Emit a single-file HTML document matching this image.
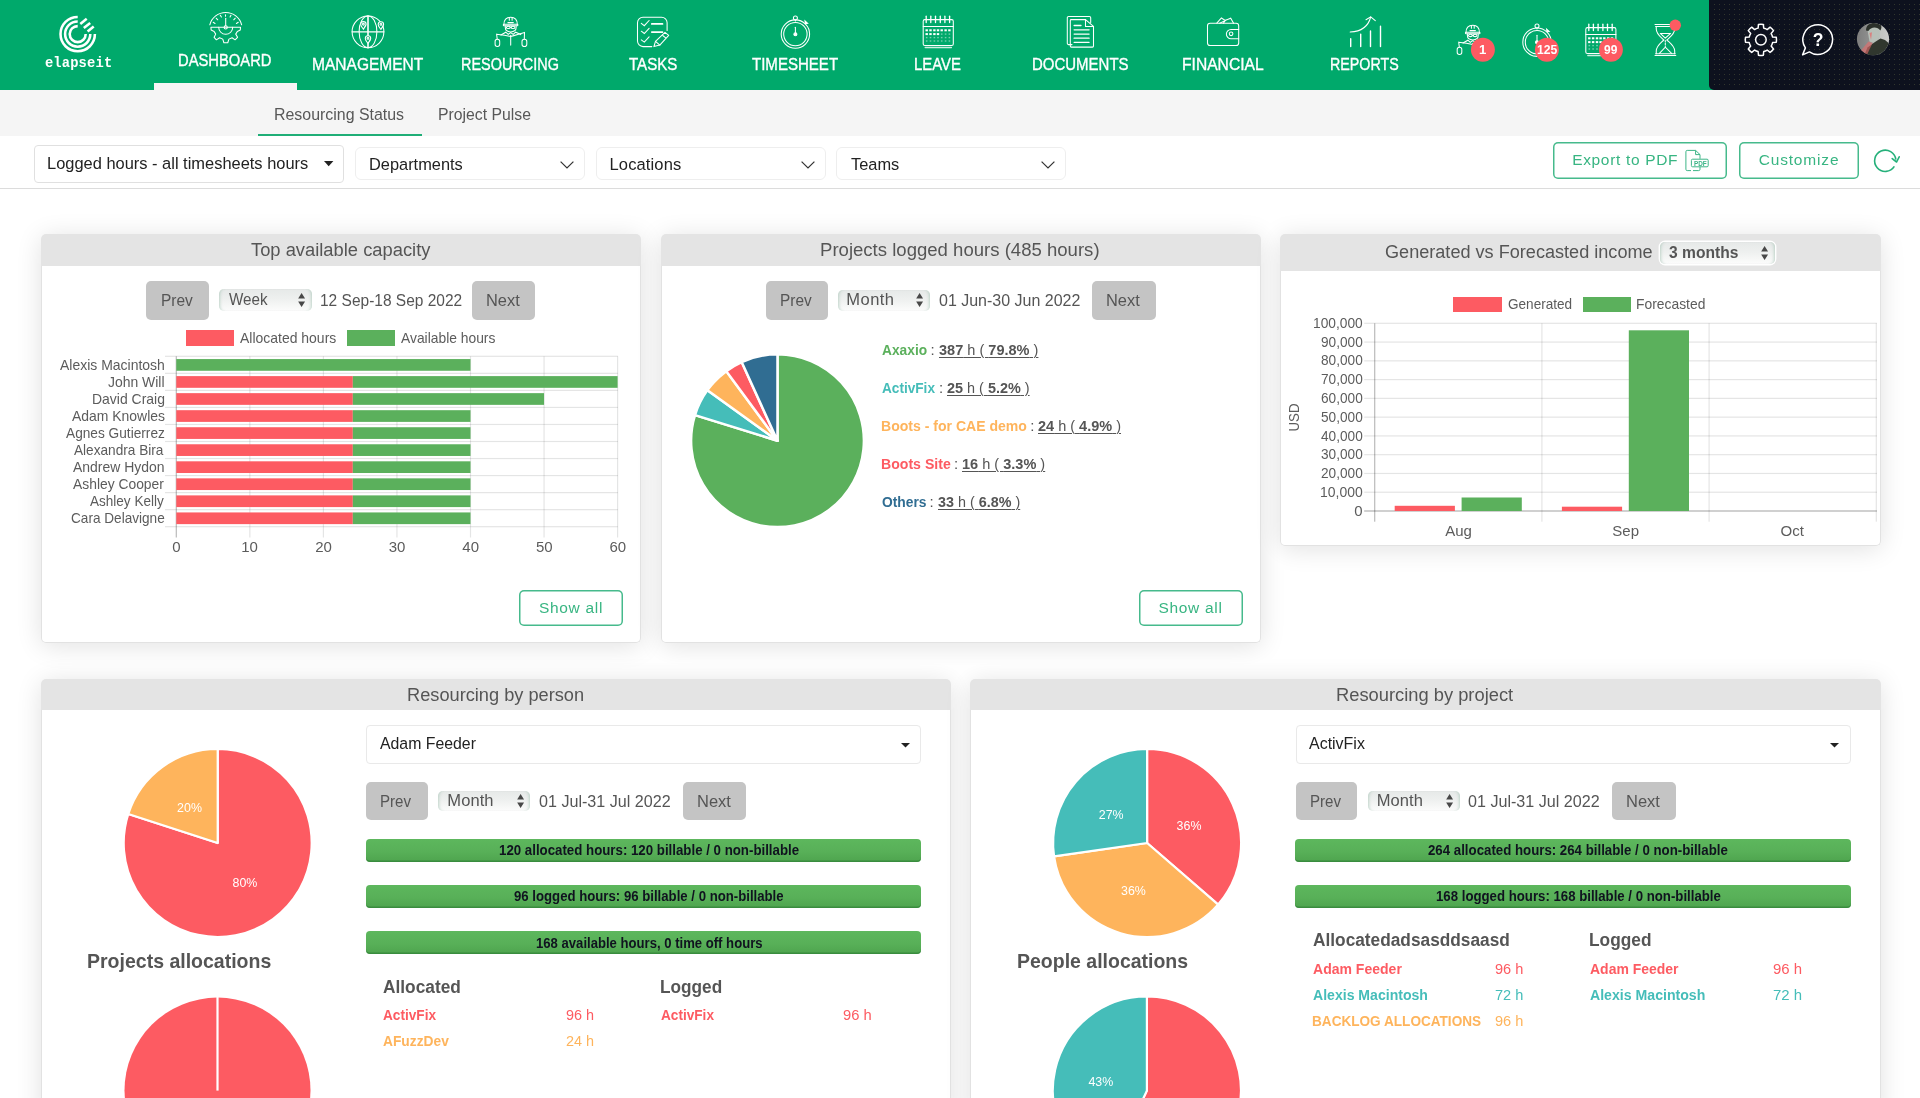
<!DOCTYPE html>
<html lang="en"><head><meta charset="utf-8"><title>elapseit - Dashboard</title>
<style>
html,body{margin:0;padding:0;}
body{width:1920px;height:1098px;overflow:hidden;background:#fff;font-family:"Liberation Sans",sans-serif;position:relative;}
svg{position:absolute;overflow:visible;}
.panel{position:absolute;background:#fff;border-radius:5px;box-shadow:0 3px 26px rgba(0,0,0,0.12);}
.pb{position:absolute;left:0;right:0;bottom:0;border:1px solid #e2e2e2;border-top:none;border-radius:0 0 5px 5px;box-sizing:border-box;}
.ph{position:absolute;left:0;top:0;right:0;background:#e4e4e4;border-radius:5px 5px 0 0;}
.gbtn{position:absolute;background:#c4c4c4;border-radius:5px;}
.sel{position:absolute;border-radius:5px;background:linear-gradient(#e6e9e8 0%,#eef0ef 45%,#f7f8f7 80%,#fcfcfc 100%);box-shadow:inset 3px 0 3px -2px rgba(150,185,168,0.55),inset -3px 0 3px -2px rgba(150,185,168,0.55);}
.obtn{position:absolute;box-shadow:inset 0 0 0 1.5px #46ba8c;border-radius:5px;box-sizing:border-box;}
.pbar{position:absolute;border-radius:4px;background:linear-gradient(#5db75d 0%,#58b058 55%,#4ea44e 100%);box-shadow:inset 0 -1.5px 0 rgba(40,120,50,0.55);}
</style></head><body><div style="position:absolute;left:0;top:0;width:1920px;height:1098px;will-change:transform;">
<div style="position:absolute;left:0.00px;top:0.00px;width:1920.00px;height:90.00px;background:#00a96b;"></div>
<div style="position:absolute;left:154.00px;top:82.50px;width:143.00px;height:7.50px;background:#f5f5f5;"></div>
<div style="position:absolute;left:0.00px;top:90.00px;width:1920.00px;height:46.00px;background:#f5f5f5;"></div>
<div style="position:absolute;left:0.00px;top:188.00px;width:1920.00px;height:1.00px;background:#dcdcdc;"></div>
<svg style="left:0;top:0" width="160" height="90" fill="none" stroke="#fff" stroke-width="2.55"><path d="M94.90 34.10 A17.20 17.20 0 1 1 77.70 16.90"/><path d="M90.30 34.10 A12.60 12.60 0 1 1 77.70 21.50"/><path d="M85.70 34.10 A8.00 8.00 0 1 1 77.70 26.10"/><path d="M80.3 23.9L86.7 18.8"/><path d="M83.8 28.1L90.2 23.0"/><path d="M87.6 31.6L93.7 26.5"/></svg>
<span style="position:absolute;white-space:nowrap;left:44.90px;top:57px;font:700 13.75px/1 'Liberation Mono', monospace;color:#fff;letter-spacing:0.177px;">elapseit</span>
<span style="position:absolute;white-space:nowrap;left:178.11px;top:53px;font:400 16.53px/1 'Liberation Sans', sans-serif;color:#fff;transform:scaleX(0.8940);transform-origin:0 50%;-webkit-text-stroke:0.35px #fff;">DASHBOARD</span>
<span style="position:absolute;white-space:nowrap;left:311.56px;top:57px;font:400 16.53px/1 'Liberation Sans', sans-serif;color:#fff;transform:scaleX(0.9405);transform-origin:0 50%;-webkit-text-stroke:0.35px #fff;">MANAGEMENT</span>
<span style="position:absolute;white-space:nowrap;left:461.13px;top:57px;font:400 16.53px/1 'Liberation Sans', sans-serif;color:#fff;transform:scaleX(0.8746);transform-origin:0 50%;-webkit-text-stroke:0.35px #fff;">RESOURCING</span>
<span style="position:absolute;white-space:nowrap;left:629.00px;top:57px;font:400 16.53px/1 'Liberation Sans', sans-serif;color:#fff;transform:scaleX(0.9129);transform-origin:0 50%;-webkit-text-stroke:0.35px #fff;">TASKS</span>
<span style="position:absolute;white-space:nowrap;left:752.30px;top:57px;font:400 16.53px/1 'Liberation Sans', sans-serif;color:#fff;transform:scaleX(0.9108);transform-origin:0 50%;-webkit-text-stroke:0.35px #fff;">TIMESHEET</span>
<span style="position:absolute;white-space:nowrap;left:914.10px;top:57px;font:400 16.53px/1 'Liberation Sans', sans-serif;color:#fff;transform:scaleX(0.9019);transform-origin:0 50%;-webkit-text-stroke:0.35px #fff;">LEAVE</span>
<span style="position:absolute;white-space:nowrap;left:1031.79px;top:57px;font:400 16.53px/1 'Liberation Sans', sans-serif;color:#fff;transform:scaleX(0.9069);transform-origin:0 50%;-webkit-text-stroke:0.35px #fff;">DOCUMENTS</span>
<span style="position:absolute;white-space:nowrap;left:1181.55px;top:57px;font:400 16.53px/1 'Liberation Sans', sans-serif;color:#fff;transform:scaleX(0.9462);transform-origin:0 50%;-webkit-text-stroke:0.35px #fff;">FINANCIAL</span>
<span style="position:absolute;white-space:nowrap;left:1330.44px;top:57px;font:400 16.53px/1 'Liberation Sans', sans-serif;color:#fff;transform:scaleX(0.8647);transform-origin:0 50%;-webkit-text-stroke:0.35px #fff;">REPORTS</span>
<div style="position:absolute;left:1709px;top:0;width:211px;height:90px;background-color:#0d111e;border-bottom-left-radius:5px;"></div>
<div style="position:absolute;left:1713px;top:3px;width:207px;height:84px;background-image:radial-gradient(circle at 1.5px 1.5px, rgba(120,130,75,0.34) 0.45px, transparent 0.95px);background-size:5px 5px;"></div>
<svg style="left:0;top:0" width="1920" height="90" fill="none" stroke="#fff" stroke-width="1.05" stroke-linecap="round"><path d="M209.8 24.8 A16.46 16.46 0 0 1 241.65 24.8" /><path d="M210.93 27.30 L211.16 30.03 L214.12 31.40 L215.71 34.13 L214.12 37.32 L216.39 39.82 L219.58 37.77 L222.77 39.14 L223.90 42.78 L227.77 42.78 L228.91 39.14 L232.10 37.77 L235.05 39.82 L237.56 37.32 L235.74 34.13 L237.33 31.40 L240.29 30.03 L240.52 27.30 Z" stroke-linejoin="round"/><path d="M218.7 27.3 A7 7 0 0 0 232.7 27.3" /><circle cx="225.7" cy="27.4" r="1.6"/><path d="M225.7 25.8 V18.2" /><path d="M225.50 14.80L225.50 16.20" /><path d="M220.26 15.24L221.40 17.06" /><path d="M216.17 18.20L217.76 19.80" /><path d="M213.20 22.30L215.03 23.43" /><path d="M230.96 15.24L230.05 17.06" /><path d="M235.28 18.20L233.69 19.80" /><path d="M238.24 22.30L236.42 23.43" /><circle cx="368.00" cy="31.85" r="15.90"/><ellipse cx="368.00" cy="31.85" rx="8.9" ry="15.90"/><path d="M368.00 15.95 V47.75" stroke-width="1.6"/><path d="M352.10 31.85 H383.90" /><path d="M363.40 29.20 C362.20 27.60 360.70 26.20 360.70 24.30 C360.70 20.70 366.10 20.70 366.10 24.30 Z M366.10 24.30 C366.10 26.20 364.60 27.60 363.40 29.20" fill="#00a96b"/><circle cx="363.40" cy="24.20" r="0.9"/><path d="M380.90 29.40 C379.70 27.80 378.20 26.40 378.20 24.50 C378.20 20.90 383.60 20.90 383.60 24.50 Z M383.60 24.50 C383.60 26.40 382.10 27.80 380.90 29.40" fill="#00a96b"/><circle cx="380.90" cy="24.40" r="0.9"/><path d="M368.00 43.40 C366.80 41.80 365.30 40.40 365.30 38.50 C365.30 34.90 370.70 34.90 370.70 38.50 Z M370.70 38.50 C370.70 40.40 369.20 41.80 368.00 43.40" fill="#00a96b"/><circle cx="368.00" cy="38.40" r="0.9"/><g transform="translate(0.00 0.00)"><path d="M503.9 24.6 C503.9 20 506.5 17.3 510.7 17.3 C514.9 17.3 517.3 20 517.3 24.6" /><rect x="503.3" y="24.3" width="14.6" height="1.5" rx="0.7"/><path d="M509.3 17.5 V20.3 M512.1 17.5 V20.3" /><path d="M508 22.6 H513.2" stroke-width="1.4"/><path d="M505.3 26 V27.6 C505.3 30.4 507.9 31.9 510.7 31.9 C513.5 31.9 516.1 30.4 516.1 27.6 V26" /><ellipse cx="508.3" cy="27.4" rx="1.9" ry="1.2"/><ellipse cx="513.0" cy="27.4" rx="1.9" ry="1.2"/><path d="M510.2 27.2 H511.1" /><path d="M500.9 35 L505.8 32.2 L508.2 34.4 L510.7 32.6 L513.2 34.4 L515.6 32.2 L520.8 34.6" /><path d="M497.2 39 L496.6 34.2 C501 34.6 506 35.2 510.7 36.4 C515 35.4 520 33.6 524.5 32.4 L524.3 39" /><path d="M510.7 35.2 V45.1" /><rect x="495.1" y="39.2" width="4.6" height="7.3" rx="2.2"/><rect x="522.0" y="39.2" width="4.8" height="7.3" rx="2.3"/></g><path d="M651.8 46.6 H643 A5.5 5.5 0 0 1 637.5 41.1 V22.8 A5.5 5.5 0 0 1 643 17.3 H661.6 A5.5 5.5 0 0 1 667.1 22.8 V30.5" /><path d="M641.3 23.40 L644.3 25.70 L649.1 20.50" /><path d="M641.3 31.20 L644.3 33.50 L649.1 28.30" /><path d="M641.3 39.80 L644.3 42.10 L649.1 36.90" /><path d="M651.8 23.9 H662.5 M651.8 32.1 H662.5" stroke-width="1.7"/><path d="M653.9 46.6 L655.5 41.4 L665.0 32.3 L668.7 35.3 L659.8 45.1 Z" stroke-linejoin="round"/><path d="M655.5 41.4 L659.8 45.1 M662.7 35.5 L665.7 37.8" /><g transform="translate(0.00 0.00)"><circle cx="795.40" cy="34.10" r="14.2"/><circle cx="795.40" cy="34.10" r="11.7"/><circle cx="795.40" cy="17.9" r="2.0"/><path d="M795.40 19.9 V20.9" /><path d="M805.0 21.0 L807.6 23.4 L805.4 23.6 Z" fill="#fff"/><path d="M795.40 27.2 V32.6" /><circle cx="795.40" cy="34.2" r="1.5" fill="#fff"/></g><g transform="translate(0.00 0.00)"><rect x="923.2" y="19.6" width="30.1" height="25.9" rx="1.6"/><path d="M923.2 26.4 H953.3" /><path d="M925.2 47.5 H951.4" stroke-width="1.3" stroke-opacity="0.8"/><path d="M926.20 16.2 V22.5" stroke-width="1.3"/><path d="M930.80 16.2 V22.5" stroke-width="1.3"/><path d="M935.50 16.2 V22.5" stroke-width="1.3"/><path d="M940.30 16.2 V22.5" stroke-width="1.3"/><path d="M944.90 16.2 V22.5" stroke-width="1.3"/><path d="M949.60 16.2 V22.5" stroke-width="1.3"/><rect x="925.50" y="29.30" width="2.4" height="2.0" fill="#fff" stroke="none"/><rect x="929.30" y="29.30" width="2.4" height="2.0" fill="#fff" stroke="none"/><rect x="933.20" y="29.30" width="2.4" height="2.0" fill="#fff" stroke="none"/><rect x="936.80" y="29.30" width="2.4" height="2.0" fill="#fff" stroke="none"/><rect x="940.50" y="29.30" width="2.4" height="2.0" fill="#fff" stroke="none"/><rect x="944.40" y="29.30" width="2.4" height="2.0" fill="#fff" stroke="none"/><rect x="948.20" y="29.30" width="2.4" height="2.0" fill="#fff" stroke="none"/><rect x="925.50" y="33.10" width="2.4" height="2.0" fill="#fff" stroke="none"/><rect x="929.30" y="33.10" width="2.4" height="2.0" fill="#fff" stroke="none"/><rect x="933.20" y="33.10" width="2.4" height="2.0" fill="#fff" stroke="none"/><rect x="936.80" y="33.10" width="2.4" height="2.0" fill="#fff" stroke="none"/><rect x="940.90" y="33.40" width="1.6" height="1.4" fill="#fff" fill-opacity="0.45" stroke="none"/><rect x="944.80" y="33.40" width="1.6" height="1.4" fill="#fff" fill-opacity="0.45" stroke="none"/><rect x="948.60" y="33.40" width="1.6" height="1.4" fill="#fff" fill-opacity="0.45" stroke="none"/><rect x="925.90" y="36.90" width="1.6" height="1.4" fill="#fff" fill-opacity="0.45" stroke="none"/><rect x="929.70" y="36.90" width="1.6" height="1.4" fill="#fff" fill-opacity="0.45" stroke="none"/><rect x="933.60" y="36.90" width="1.6" height="1.4" fill="#fff" fill-opacity="0.45" stroke="none"/><rect x="937.20" y="36.90" width="1.6" height="1.4" fill="#fff" fill-opacity="0.45" stroke="none"/><rect x="940.90" y="36.90" width="1.6" height="1.4" fill="#fff" fill-opacity="0.45" stroke="none"/><rect x="944.80" y="36.90" width="1.6" height="1.4" fill="#fff" fill-opacity="0.45" stroke="none"/><rect x="948.60" y="36.90" width="1.6" height="1.4" fill="#fff" fill-opacity="0.45" stroke="none"/><rect x="925.90" y="40.30" width="1.6" height="1.4" fill="#fff" fill-opacity="0.45" stroke="none"/><rect x="929.70" y="40.30" width="1.6" height="1.4" fill="#fff" fill-opacity="0.45" stroke="none"/><rect x="933.60" y="40.30" width="1.6" height="1.4" fill="#fff" fill-opacity="0.45" stroke="none"/><rect x="937.20" y="40.30" width="1.6" height="1.4" fill="#fff" fill-opacity="0.45" stroke="none"/><rect x="940.90" y="40.30" width="1.6" height="1.4" fill="#fff" fill-opacity="0.45" stroke="none"/><rect x="944.80" y="40.30" width="1.6" height="1.4" fill="#fff" fill-opacity="0.45" stroke="none"/><rect x="948.60" y="40.30" width="1.6" height="1.4" fill="#fff" fill-opacity="0.45" stroke="none"/></g><path d="M1072 44.6 H1068.6 A1.3 1.3 0 0 1 1067.3 43.3 V17.7 A1.3 1.3 0 0 1 1068.6 16.4 H1089.4 A1.3 1.3 0 0 1 1090.7 17.7 V22.5" /><path d="M1070.3 20.4 A0.8 0.8 0 0 1 1071.1 19.6 H1085.5 L1093.5 26.4 V46.1 A1 1 0 0 1 1092.5 47.1 H1071.3 A1 1 0 0 1 1070.3 46.1 Z" stroke-linejoin="round"/><path d="M1085.5 19.6 V26.4 H1093.5" /><path d="M1074.1 25.5 H1081 M1074.1 29.8 H1089.1 M1074.1 34.1 H1089.1 M1074.1 38.2 H1089.1 M1074.1 42.3 H1089.1" stroke-width="1.3"/><rect x="1207.5" y="23.2" width="31.2" height="22.3" rx="2.6"/><path d="M1238.7 29.4 H1231 A4.65 4.65 0 0 0 1231 38.7 H1238.7" /><circle cx="1231.1" cy="33.8" r="1.8"/><path d="M1216.8 23.2 L1221.4 18 L1225.2 20.5 L1230.7 18.2 L1233.6 23.2" /><path d="M1219.8 23.2 L1225.2 20.5 L1223.4 23.2" /><path d="M1350.7 38.7 V46.6 M1360.7 34.1 V46.6 M1370.5 30.9 V46.6 M1380.5 26.2 V46.6" stroke-width="1.4"/><path d="M1350.2 31.9 C1360 31.6 1368 27.5 1370.7 17" /><path d="M1366 19.8 L1370.7 16.8 L1375.3 20.7" /><g transform="translate(962.10 8.00)"><path d="M503.9 24.6 C503.9 20 506.5 17.3 510.7 17.3 C514.9 17.3 517.3 20 517.3 24.6" /><rect x="503.3" y="24.3" width="14.6" height="1.5" rx="0.7"/><path d="M509.3 17.5 V20.3 M512.1 17.5 V20.3" /><path d="M508 22.6 H513.2" stroke-width="1.4"/><path d="M505.3 26 V27.6 C505.3 30.4 507.9 31.9 510.7 31.9 C513.5 31.9 516.1 30.4 516.1 27.6 V26" /><ellipse cx="508.3" cy="27.4" rx="1.9" ry="1.2"/><ellipse cx="513.0" cy="27.4" rx="1.9" ry="1.2"/><path d="M510.2 27.2 H511.1" /><path d="M500.9 35 L505.8 32.2 L508.2 34.4 L510.7 32.6 L513.2 34.4 L515.6 32.2 L520.8 34.6" /><path d="M497.2 39 L496.6 34.2 C501 34.6 506 35.2 510.7 36.4 C515 35.4 520 33.6 524.5 32.4 L524.3 39" /><path d="M510.7 35.2 V45.1" /><rect x="495.1" y="39.2" width="4.6" height="7.3" rx="2.2"/><rect x="522.0" y="39.2" width="4.8" height="7.3" rx="2.3"/></g><g transform="translate(741.60 8.10)"><circle cx="795.40" cy="34.10" r="14.2"/><circle cx="795.40" cy="34.10" r="11.7"/><circle cx="795.40" cy="17.9" r="2.0"/><path d="M795.40 19.9 V20.9" /><path d="M805.0 21.0 L807.6 23.4 L805.4 23.6 Z" fill="#fff"/><path d="M795.40 27.2 V32.6" /><circle cx="795.40" cy="34.2" r="1.5" fill="#fff"/></g><g transform="translate(662.60 8.00)"><rect x="923.2" y="19.6" width="30.1" height="25.9" rx="1.6"/><path d="M923.2 26.4 H953.3" /><path d="M925.2 47.5 H951.4" stroke-width="1.3" stroke-opacity="0.8"/><path d="M926.20 16.2 V22.5" stroke-width="1.3"/><path d="M930.80 16.2 V22.5" stroke-width="1.3"/><path d="M935.50 16.2 V22.5" stroke-width="1.3"/><path d="M940.30 16.2 V22.5" stroke-width="1.3"/><path d="M944.90 16.2 V22.5" stroke-width="1.3"/><path d="M949.60 16.2 V22.5" stroke-width="1.3"/><rect x="925.50" y="29.30" width="2.4" height="2.0" fill="#fff" stroke="none"/><rect x="929.30" y="29.30" width="2.4" height="2.0" fill="#fff" stroke="none"/><rect x="933.20" y="29.30" width="2.4" height="2.0" fill="#fff" stroke="none"/><rect x="936.80" y="29.30" width="2.4" height="2.0" fill="#fff" stroke="none"/><rect x="940.50" y="29.30" width="2.4" height="2.0" fill="#fff" stroke="none"/><rect x="944.40" y="29.30" width="2.4" height="2.0" fill="#fff" stroke="none"/><rect x="948.20" y="29.30" width="2.4" height="2.0" fill="#fff" stroke="none"/><rect x="925.50" y="33.10" width="2.4" height="2.0" fill="#fff" stroke="none"/><rect x="929.30" y="33.10" width="2.4" height="2.0" fill="#fff" stroke="none"/><rect x="933.20" y="33.10" width="2.4" height="2.0" fill="#fff" stroke="none"/><rect x="936.80" y="33.10" width="2.4" height="2.0" fill="#fff" stroke="none"/><rect x="940.90" y="33.40" width="1.6" height="1.4" fill="#fff" fill-opacity="0.45" stroke="none"/><rect x="944.80" y="33.40" width="1.6" height="1.4" fill="#fff" fill-opacity="0.45" stroke="none"/><rect x="948.60" y="33.40" width="1.6" height="1.4" fill="#fff" fill-opacity="0.45" stroke="none"/><rect x="925.90" y="36.90" width="1.6" height="1.4" fill="#fff" fill-opacity="0.45" stroke="none"/><rect x="929.70" y="36.90" width="1.6" height="1.4" fill="#fff" fill-opacity="0.45" stroke="none"/><rect x="933.60" y="36.90" width="1.6" height="1.4" fill="#fff" fill-opacity="0.45" stroke="none"/><rect x="937.20" y="36.90" width="1.6" height="1.4" fill="#fff" fill-opacity="0.45" stroke="none"/><rect x="940.90" y="36.90" width="1.6" height="1.4" fill="#fff" fill-opacity="0.45" stroke="none"/><rect x="944.80" y="36.90" width="1.6" height="1.4" fill="#fff" fill-opacity="0.45" stroke="none"/><rect x="948.60" y="36.90" width="1.6" height="1.4" fill="#fff" fill-opacity="0.45" stroke="none"/><rect x="925.90" y="40.30" width="1.6" height="1.4" fill="#fff" fill-opacity="0.45" stroke="none"/><rect x="929.70" y="40.30" width="1.6" height="1.4" fill="#fff" fill-opacity="0.45" stroke="none"/><rect x="933.60" y="40.30" width="1.6" height="1.4" fill="#fff" fill-opacity="0.45" stroke="none"/><rect x="937.20" y="40.30" width="1.6" height="1.4" fill="#fff" fill-opacity="0.45" stroke="none"/><rect x="940.90" y="40.30" width="1.6" height="1.4" fill="#fff" fill-opacity="0.45" stroke="none"/><rect x="944.80" y="40.30" width="1.6" height="1.4" fill="#fff" fill-opacity="0.45" stroke="none"/><rect x="948.60" y="40.30" width="1.6" height="1.4" fill="#fff" fill-opacity="0.45" stroke="none"/></g><path d="M1655 24.5 H1675.6 M1655.6 26.4 H1675 M1655 55.5 H1675.8 M1655.6 53.75 H1675.2" /><path d="M1656.25 26.4 V29 C1656.25 34 1660.5 36.8 1663.8 40 C1660.5 43.2 1656.25 46 1656.25 51 V53.75" /><path d="M1674.7 26.4 V29 C1674.7 34 1670.3 36.8 1666.9 40 C1670.3 43.2 1674.7 46 1674.7 51 V53.75" /><path d="M1660.3 33.4 H1670.6 L1665.3 38.1 Z" stroke-linejoin="round"/><path d="M1659.4 53.4 L1665.3 47.2 L1671.6 53.4" /><path d="M1665.3 40.5 V46.5" stroke-dasharray="1.5 1.3"/><circle cx="1482.9" cy="49.8" r="12" fill="#fd5b62" stroke="none"/><circle cx="1546.9" cy="49.8" r="12" fill="#fd5b62" stroke="none"/><circle cx="1610.9" cy="49.8" r="12" fill="#fd5b62" stroke="none"/><circle cx="1675.3" cy="25.3" r="5.7" fill="#fd5b62" stroke="none"/></svg>
<span style="position:absolute;white-space:nowrap;left:1479.10px;top:43px;font:700 13.22px/1 'Liberation Sans', sans-serif;color:#fff;">1</span>
<span style="position:absolute;white-space:nowrap;left:1536.90px;top:43px;font:700 13.22px/1 'Liberation Sans', sans-serif;color:#fff;transform:scaleX(0.9215);transform-origin:0 50%;">125</span>
<span style="position:absolute;white-space:nowrap;left:1604.40px;top:43px;font:700 13.22px/1 'Liberation Sans', sans-serif;color:#fff;transform:scaleX(0.9058);transform-origin:0 50%;">99</span>
<span style="position:absolute;white-space:nowrap;left:1812.80px;top:32px;font:700 17.56px/1 'Liberation Sans', sans-serif;color:#fff;">?</span>
<span style="position:absolute;white-space:nowrap;left:1693.50px;top:161px;font:700 6.82px/1 'Liberation Sans', sans-serif;color:#3db587;transform:scaleX(0.9359);transform-origin:0 50%;">PDF</span>
<svg style="left:0;top:0" width="1920" height="90" fill="none" stroke="#fff" stroke-width="1.5" stroke-linejoin="round"><defs><clipPath id="avc"><circle cx="1873" cy="39.1" r="16.1"/></clipPath><linearGradient id="avg" x1="0" y1="0" x2="1" y2="0"><stop offset="0" stop-color="#7c7c7c"/><stop offset="0.4" stop-color="#8f908f"/><stop offset="0.72" stop-color="#c2c4c2"/><stop offset="1" stop-color="#cdcdcd"/></linearGradient></defs><path d="M1758.10 28.13 L1758.46 24.39 A15.60 15.60 0 0 1 1763.34 24.39 L1763.70 28.13 A12.00 12.00 0 0 1 1767.17 29.57 L1770.07 27.18 A15.60 15.60 0 0 1 1773.52 30.63 L1771.13 33.53 A12.00 12.00 0 0 1 1772.57 37.00 L1776.31 37.36 A15.60 15.60 0 0 1 1776.31 42.24 L1772.57 42.60 A12.00 12.00 0 0 1 1771.13 46.07 L1773.52 48.97 A15.60 15.60 0 0 1 1770.07 52.42 L1767.17 50.03 A12.00 12.00 0 0 1 1763.70 51.47 L1763.34 55.21 A15.60 15.60 0 0 1 1758.46 55.21 L1758.10 51.47 A12.00 12.00 0 0 1 1754.63 50.03 L1751.73 52.42 A15.60 15.60 0 0 1 1748.28 48.97 L1750.67 46.07 A12.00 12.00 0 0 1 1749.23 42.60 L1745.49 42.24 A15.60 15.60 0 0 1 1745.49 37.36 L1749.23 37.00 A12.00 12.00 0 0 1 1750.67 33.53 L1748.28 30.63 A15.60 15.60 0 0 1 1751.73 27.18 L1754.63 29.57 A12.00 12.00 0 0 1 1758.10 28.13Z" /><circle cx="1760.9" cy="39.8" r="5.3"/><path d="M1809.4 51.9 A14.85 14.85 0 1 0 1805.4 47.9 L1802.6 54.9 Z" /><g clip-path="url(#avc)" stroke="none"><rect x="1856" y="22" width="34" height="34" fill="url(#avg)"/><path d="M1867.5 30 C1868 25 1877.5 24 1879.5 28.5 L1879.6 36.5 L1875.5 43.5 L1869.5 41.5 Z" fill="#b7c0b8"/><path d="M1866 30.5 C1866 23 1874 21.5 1880.5 24.5 C1882 26 1881.5 29 1880.2 30.5 C1878 26.5 1871 26 1868.3 31 Z" fill="#2b302a"/><path d="M1863 58 L1867.5 47.5 L1875 42 L1880.5 38.5 L1885 40 L1891 45 L1891 58 Z" fill="#30372e"/><path d="M1860.5 51 L1868.5 41.5 L1872.5 43 L1866 57 Z" fill="#e86a6a" fill-opacity="0.6"/><path d="M1869.5 33 L1872 32.2 L1871 40 Z" fill="#e27070" fill-opacity="0.8"/></g></svg>
<span style="position:absolute;white-space:nowrap;left:274.34px;top:107px;font:400 16.53px/1 'Liberation Sans', sans-serif;color:#585858;transform:scaleX(0.9634);transform-origin:0 50%;">Resourcing Status</span>
<span style="position:absolute;white-space:nowrap;left:438.04px;top:107px;font:400 16.53px/1 'Liberation Sans', sans-serif;color:#585858;transform:scaleX(0.9551);transform-origin:0 50%;">Project Pulse</span>
<div style="position:absolute;left:258.00px;top:134.00px;width:163.75px;height:2.00px;background:#1fae77;"></div>
<div style="position:absolute;left:34.00px;top:144.50px;width:310.00px;height:38.00px;border:1px solid #e0e0e0;border-radius:4px;box-sizing:border-box;"></div>
<span style="position:absolute;white-space:nowrap;left:46.51px;top:156px;font:400 16.53px/1 'Liberation Sans', sans-serif;color:#222;transform:scaleX(0.9950);transform-origin:0 50%;">Logged hours - all timesheets hours</span>
<svg style="left:323.5px;top:161px" width="10" height="6"><path d="M0 0H9.4L4.7 5.2Z" fill="#222"/></svg>
<div style="position:absolute;left:355.40px;top:147.30px;width:229.30px;height:32.70px;border:1px solid #eeeeee;border-radius:6px;box-sizing:border-box;"></div>
<span style="position:absolute;white-space:nowrap;left:368.71px;top:157px;font:400 16.53px/1 'Liberation Sans', sans-serif;color:#222;transform:scaleX(0.9916);transform-origin:0 50%;">Departments</span>
<svg style="left:560.4px;top:160.5px" width="14" height="8" fill="none" stroke="#333" stroke-width="1.2"><path d="M0.6 0.6L7 7L13.4 0.6"/></svg>
<div style="position:absolute;left:595.50px;top:147.30px;width:230.10px;height:32.70px;border:1px solid #eeeeee;border-radius:6px;box-sizing:border-box;"></div>
<span style="position:absolute;white-space:nowrap;left:609.50px;top:157px;font:400 16.53px/1 'Liberation Sans', sans-serif;color:#222;letter-spacing:0.132px;">Locations</span>
<svg style="left:801.0px;top:160.5px" width="14" height="8" fill="none" stroke="#333" stroke-width="1.2"><path d="M0.6 0.6L7 7L13.4 0.6"/></svg>
<div style="position:absolute;left:836.40px;top:147.30px;width:230.10px;height:32.70px;border:1px solid #eeeeee;border-radius:6px;box-sizing:border-box;"></div>
<span style="position:absolute;white-space:nowrap;left:851.00px;top:157px;font:400 16.53px/1 'Liberation Sans', sans-serif;color:#222;transform:scaleX(0.9921);transform-origin:0 50%;">Teams</span>
<svg style="left:1041.4px;top:160.5px" width="14" height="8" fill="none" stroke="#333" stroke-width="1.2"><path d="M0.6 0.6L7 7L13.4 0.6"/></svg>
<div class="obtn" style="left:1553.3px;top:142.3px;width:173.4px;height:36.5px;"></div>
<span style="position:absolute;white-space:nowrap;left:1572.20px;top:152px;font:400 15.49px/1 'Liberation Sans', sans-serif;color:#38b582;letter-spacing:0.668px;">Export to PDF</span>
<div class="obtn" style="left:1738.9px;top:142.3px;width:119.8px;height:36.5px;"></div>
<span style="position:absolute;white-space:nowrap;left:1758.70px;top:152px;font:400 15.49px/1 'Liberation Sans', sans-serif;color:#38b582;letter-spacing:0.834px;">Customize</span>
<svg style="left:0;top:130px" width="1920" height="70" viewBox="0 130 1920 70" fill="none" stroke="#3db587" stroke-width="1" stroke-linejoin="round"><path d="M1691 170.6 H1687.2 A1.3 1.3 0 0 1 1685.9 169.3 V151.7 A1.3 1.3 0 0 1 1687.2 150.4 H1695.6 L1700 154.6 V158.8" /><path d="M1695.6 150.4 V154.6 H1700" /><rect x="1691.4" y="159.2" width="16.8" height="7.6" rx="1.2"/><path d="M1700 167 V169.3 A1.3 1.3 0 0 1 1698.7 170.6 H1693" /><path d="M1894.33 166.44 A10.65 10.65 0 1 1 1895.89 159.69" stroke-width="1.6" stroke="#25b07a"/><path d="M1892.2 158.6 L1896.6 162.0 L1899.2 156.8" stroke-width="1.6" stroke="#25b07a" stroke-linecap="round"/></svg>
<div class="panel" style="left:41.0px;top:234.0px;width:600.0px;height:409.0px;"><div class="ph" style="height:31.5px;"></div><div class="pb" style="top:31.5px;"></div></div>
<span style="position:absolute;white-space:nowrap;left:251.20px;top:241px;font:400 18.59px/1 'Liberation Sans', sans-serif;color:#555;transform:scaleX(0.9870);transform-origin:0 50%;">Top available capacity</span>
<div class="gbtn" style="left:146.3px;top:280.8px;width:62.9px;height:38.9px;"></div>
<span style="position:absolute;white-space:nowrap;left:160.76px;top:293px;font:400 16.53px/1 'Liberation Sans', sans-serif;color:#555;transform:scaleX(0.9377);transform-origin:0 50%;">Prev</span>
<div class="sel" style="left:219.0px;top:289.0px;width:92.8px;height:21.5px;"></div>
<span style="position:absolute;white-space:nowrap;left:228.75px;top:292px;font:400 16.53px/1 'Liberation Sans', sans-serif;color:#555;transform:scaleX(0.9201);transform-origin:0 50%;">Week</span>
<svg style="left:297.90px;top:292.00px" width="8" height="16"><path d="M0.15 6.45L3.6 1.0L7.05 6.45Z M0.15 9.6L3.6 15.0L7.05 9.6Z" fill="#484848"/></svg>
<span style="position:absolute;white-space:nowrap;left:319.86px;top:293px;font:400 16.53px/1 'Liberation Sans', sans-serif;color:#555;transform:scaleX(0.9386);transform-origin:0 50%;">12 Sep-18 Sep 2022</span>
<div class="gbtn" style="left:471.7px;top:280.8px;width:63.3px;height:38.9px;"></div>
<span style="position:absolute;white-space:nowrap;left:486.01px;top:293px;font:400 16.53px/1 'Liberation Sans', sans-serif;color:#555;transform:scaleX(0.9949);transform-origin:0 50%;">Next</span>
<div style="position:absolute;left:185.80px;top:330.30px;width:48.40px;height:15.30px;background:#fd5b62;"></div>
<span style="position:absolute;white-space:nowrap;left:240.00px;top:330px;font:400 15.00px/1 'Liberation Sans', sans-serif;color:#5c5c5c;transform:scaleX(0.9310);transform-origin:0 50%;">Allocated hours</span>
<div style="position:absolute;left:347.00px;top:330.30px;width:48.20px;height:15.30px;background:#5bb05c;"></div>
<span style="position:absolute;white-space:nowrap;left:400.80px;top:330px;font:400 15.00px/1 'Liberation Sans', sans-serif;color:#5c5c5c;transform:scaleX(0.9225);transform-origin:0 50%;">Available hours</span>
<svg style="left:0;top:0" width="1920" height="1098" ><rect x="165" y="355.70" width="452.90" height="1.2" fill="rgba(0,10,5,0.105)"/><rect x="165" y="372.74" width="452.90" height="1.2" fill="rgba(0,10,5,0.105)"/><rect x="165" y="389.78" width="452.90" height="1.2" fill="rgba(0,10,5,0.105)"/><rect x="165" y="406.82" width="452.90" height="1.2" fill="rgba(0,10,5,0.105)"/><rect x="165" y="423.86" width="452.90" height="1.2" fill="rgba(0,10,5,0.105)"/><rect x="165" y="440.90" width="452.90" height="1.2" fill="rgba(0,10,5,0.105)"/><rect x="165" y="457.94" width="452.90" height="1.2" fill="rgba(0,10,5,0.105)"/><rect x="165" y="474.98" width="452.90" height="1.2" fill="rgba(0,10,5,0.105)"/><rect x="165" y="492.02" width="452.90" height="1.2" fill="rgba(0,10,5,0.105)"/><rect x="165" y="509.06" width="452.90" height="1.2" fill="rgba(0,10,5,0.105)"/><rect x="165" y="526.10" width="452.90" height="1.2" fill="rgba(0,10,5,0.105)"/><rect x="175.70" y="356.30" width="1.2" height="181.20" fill="rgba(0,0,0,0.27)"/><rect x="249.25" y="356.30" width="1.2" height="181.20" fill="rgba(0,10,5,0.105)"/><rect x="322.80" y="356.30" width="1.2" height="181.20" fill="rgba(0,10,5,0.105)"/><rect x="396.35" y="356.30" width="1.2" height="181.20" fill="rgba(0,10,5,0.105)"/><rect x="469.90" y="356.30" width="1.2" height="181.20" fill="rgba(0,10,5,0.105)"/><rect x="543.45" y="356.30" width="1.2" height="181.20" fill="rgba(0,10,5,0.105)"/><rect x="617.00" y="356.30" width="1.2" height="181.20" fill="rgba(0,10,5,0.105)"/><rect x="176.30" y="359.07" width="294.20" height="11.7" fill="#5bb05c"/><rect x="176.30" y="376.11" width="176.52" height="11.7" fill="#fd5b62"/><rect x="352.82" y="376.11" width="264.78" height="11.7" fill="#5bb05c"/><rect x="176.30" y="393.15" width="176.52" height="11.7" fill="#fd5b62"/><rect x="352.82" y="393.15" width="191.23" height="11.7" fill="#5bb05c"/><rect x="176.30" y="410.19" width="176.52" height="11.7" fill="#fd5b62"/><rect x="352.82" y="410.19" width="117.68" height="11.7" fill="#5bb05c"/><rect x="176.30" y="427.23" width="176.52" height="11.7" fill="#fd5b62"/><rect x="352.82" y="427.23" width="117.68" height="11.7" fill="#5bb05c"/><rect x="176.30" y="444.27" width="176.52" height="11.7" fill="#fd5b62"/><rect x="352.82" y="444.27" width="117.68" height="11.7" fill="#5bb05c"/><rect x="176.30" y="461.31" width="176.52" height="11.7" fill="#fd5b62"/><rect x="352.82" y="461.31" width="117.68" height="11.7" fill="#5bb05c"/><rect x="176.30" y="478.35" width="176.52" height="11.7" fill="#fd5b62"/><rect x="352.82" y="478.35" width="117.68" height="11.7" fill="#5bb05c"/><rect x="176.30" y="495.39" width="176.52" height="11.7" fill="#fd5b62"/><rect x="352.82" y="495.39" width="117.68" height="11.7" fill="#5bb05c"/><rect x="176.30" y="512.43" width="176.52" height="11.7" fill="#fd5b62"/><rect x="352.82" y="512.43" width="117.68" height="11.7" fill="#5bb05c"/></svg>
<span style="position:absolute;white-space:nowrap;left:59.70px;top:357px;font:400 15.00px/1 'Liberation Sans', sans-serif;color:#5c5c5c;transform:scaleX(0.9314);transform-origin:0 50%;">Alexis Macintosh</span>
<span style="position:absolute;white-space:nowrap;left:108.00px;top:374px;font:400 15.00px/1 'Liberation Sans', sans-serif;color:#5c5c5c;transform:scaleX(0.9287);transform-origin:0 50%;">John Will</span>
<span style="position:absolute;white-space:nowrap;left:91.57px;top:391px;font:400 15.00px/1 'Liberation Sans', sans-serif;color:#5c5c5c;transform:scaleX(0.9309);transform-origin:0 50%;">David Craig</span>
<span style="position:absolute;white-space:nowrap;left:71.70px;top:408px;font:400 15.00px/1 'Liberation Sans', sans-serif;color:#5c5c5c;transform:scaleX(0.9292);transform-origin:0 50%;">Adam Knowles</span>
<span style="position:absolute;white-space:nowrap;left:65.80px;top:425px;font:400 15.00px/1 'Liberation Sans', sans-serif;color:#5c5c5c;transform:scaleX(0.9121);transform-origin:0 50%;">Agnes Gutierrez</span>
<span style="position:absolute;white-space:nowrap;left:74.20px;top:442px;font:400 15.00px/1 'Liberation Sans', sans-serif;color:#5c5c5c;transform:scaleX(0.9087);transform-origin:0 50%;">Alexandra Bira</span>
<span style="position:absolute;white-space:nowrap;left:73.00px;top:459px;font:400 15.00px/1 'Liberation Sans', sans-serif;color:#5c5c5c;transform:scaleX(0.9302);transform-origin:0 50%;">Andrew Hydon</span>
<span style="position:absolute;white-space:nowrap;left:73.30px;top:476px;font:400 15.00px/1 'Liberation Sans', sans-serif;color:#5c5c5c;transform:scaleX(0.9239);transform-origin:0 50%;">Ashley Cooper</span>
<span style="position:absolute;white-space:nowrap;left:90.00px;top:493px;font:400 15.00px/1 'Liberation Sans', sans-serif;color:#5c5c5c;transform:scaleX(0.9027);transform-origin:0 50%;">Ashley Kelly</span>
<span style="position:absolute;white-space:nowrap;left:70.80px;top:510px;font:400 15.00px/1 'Liberation Sans', sans-serif;color:#5c5c5c;transform:scaleX(0.9064);transform-origin:0 50%;">Cara Delavigne</span>
<span style="position:absolute;white-space:nowrap;left:172.30px;top:539px;font:400 15.00px/1 'Liberation Sans', sans-serif;color:#5c5c5c;">0</span>
<span style="position:absolute;white-space:nowrap;left:241.18px;top:539px;font:400 15.00px/1 'Liberation Sans', sans-serif;color:#5c5c5c;">10</span>
<span style="position:absolute;white-space:nowrap;left:315.23px;top:539px;font:400 15.00px/1 'Liberation Sans', sans-serif;color:#5c5c5c;">20</span>
<span style="position:absolute;white-space:nowrap;left:388.78px;top:539px;font:400 15.00px/1 'Liberation Sans', sans-serif;color:#5c5c5c;">30</span>
<span style="position:absolute;white-space:nowrap;left:462.33px;top:539px;font:400 15.00px/1 'Liberation Sans', sans-serif;color:#5c5c5c;">40</span>
<span style="position:absolute;white-space:nowrap;left:535.88px;top:539px;font:400 15.00px/1 'Liberation Sans', sans-serif;color:#5c5c5c;">50</span>
<span style="position:absolute;white-space:nowrap;left:609.43px;top:539px;font:400 15.00px/1 'Liberation Sans', sans-serif;color:#5c5c5c;">60</span>
<div class="obtn" style="left:519.1px;top:590.2px;width:103.9px;height:35.6px;"></div>
<span style="position:absolute;white-space:nowrap;left:538.90px;top:600px;font:400 15.49px/1 'Liberation Sans', sans-serif;color:#38b582;letter-spacing:0.716px;">Show all</span>
<div class="panel" style="left:661.0px;top:234.0px;width:600.0px;height:409.0px;"><div class="ph" style="height:31.5px;"></div><div class="pb" style="top:31.5px;"></div></div>
<span style="position:absolute;white-space:nowrap;left:820.10px;top:241px;font:400 18.59px/1 'Liberation Sans', sans-serif;color:#555;transform:scaleX(0.9990);transform-origin:0 50%;">Projects logged hours (485 hours)</span>
<div class="gbtn" style="left:765.5px;top:280.8px;width:62.0px;height:38.9px;"></div>
<span style="position:absolute;white-space:nowrap;left:779.87px;top:293px;font:400 16.53px/1 'Liberation Sans', sans-serif;color:#555;transform:scaleX(0.9317);transform-origin:0 50%;">Prev</span>
<div class="sel" style="left:837.5px;top:289.6px;width:92.5px;height:21.0px;"></div>
<span style="position:absolute;white-space:nowrap;left:846.30px;top:292px;font:400 16.53px/1 'Liberation Sans', sans-serif;color:#555;letter-spacing:0.446px;">Month</span>
<svg style="left:916.40px;top:292.35px" width="8" height="16"><path d="M0.15 6.45L3.6 1.0L7.05 6.45Z M0.15 9.6L3.6 15.0L7.05 9.6Z" fill="#484848"/></svg>
<span style="position:absolute;white-space:nowrap;left:938.70px;top:293px;font:400 16.53px/1 'Liberation Sans', sans-serif;color:#555;transform:scaleX(0.9683);transform-origin:0 50%;">01 Jun-30 Jun 2022</span>
<div class="gbtn" style="left:1092.0px;top:280.8px;width:63.5px;height:38.9px;"></div>
<span style="position:absolute;white-space:nowrap;left:1106.31px;top:293px;font:400 16.53px/1 'Liberation Sans', sans-serif;color:#555;transform:scaleX(0.9949);transform-origin:0 50%;">Next</span>
<svg style="left:0;top:0" width="1920" height="1098" stroke="#fff" stroke-width="2.5" stroke-linejoin="round"><path d="M777.50 440.70 L777.50 354.30 A86.40 86.40 0 1 1 694.99 415.07 Z" fill="#5bb05c"/><path d="M777.50 440.70 L694.99 415.07 A86.40 86.40 0 0 1 707.44 390.14 Z" fill="#45bdb9"/><path d="M777.50 440.70 L707.44 390.14 A86.40 86.40 0 0 1 726.26 371.13 Z" fill="#feb45c"/><path d="M777.50 440.70 L726.26 371.13 A86.40 86.40 0 0 1 741.68 362.08 Z" fill="#fd5b62"/><path d="M777.50 440.70 L741.68 362.08 A86.40 86.40 0 0 1 777.50 354.30 Z" fill="#306d92"/></svg>
<span style="position:absolute;white-space:nowrap;left:882.20px;top:342px;font:700 14.98px/1 'Liberation Sans', sans-serif;color:#5bb05c;transform:scaleX(0.9194);transform-origin:0 50%;">Axaxio</span>
<span style="position:absolute;white-space:nowrap;left:930.40px;top:342px;font:400 14.98px/1 'Liberation Sans', sans-serif;color:#555;">:</span>
<span style="position:absolute;white-space:nowrap;left:939.00px;top:342px;font:400 14.98px/1 'Liberation Sans', sans-serif;color:#555;transform:scaleX(0.9711);transform-origin:0 50%;text-decoration:underline;text-decoration-thickness:1px;text-underline-offset:2px;"><b>387</b> h ( <b>79.8%</b> )</span>
<span style="position:absolute;white-space:nowrap;left:882.20px;top:380px;font:700 14.98px/1 'Liberation Sans', sans-serif;color:#45bdb9;transform:scaleX(0.9099);transform-origin:0 50%;">ActivFix</span>
<span style="position:absolute;white-space:nowrap;left:939.00px;top:380px;font:400 14.98px/1 'Liberation Sans', sans-serif;color:#555;">:</span>
<span style="position:absolute;white-space:nowrap;left:947.20px;top:380px;font:400 14.98px/1 'Liberation Sans', sans-serif;color:#555;transform:scaleX(0.9637);transform-origin:0 50%;text-decoration:underline;text-decoration-thickness:1px;text-underline-offset:2px;"><b>25</b> h ( <b>5.2%</b> )</span>
<span style="position:absolute;white-space:nowrap;left:881.26px;top:418px;font:700 14.98px/1 'Liberation Sans', sans-serif;color:#feb45c;transform:scaleX(0.9381);transform-origin:0 50%;">Boots - for CAE demo</span>
<span style="position:absolute;white-space:nowrap;left:1030.20px;top:418px;font:400 14.98px/1 'Liberation Sans', sans-serif;color:#555;">:</span>
<span style="position:absolute;white-space:nowrap;left:1038.40px;top:418px;font:400 14.98px/1 'Liberation Sans', sans-serif;color:#555;transform:scaleX(0.9683);transform-origin:0 50%;text-decoration:underline;text-decoration-thickness:1px;text-underline-offset:2px;"><b>24</b> h ( <b>4.9%</b> )</span>
<span style="position:absolute;white-space:nowrap;left:881.26px;top:456px;font:700 14.98px/1 'Liberation Sans', sans-serif;color:#fd5b62;transform:scaleX(0.9423);transform-origin:0 50%;">Boots Site</span>
<span style="position:absolute;white-space:nowrap;left:953.90px;top:456px;font:400 14.98px/1 'Liberation Sans', sans-serif;color:#555;">:</span>
<span style="position:absolute;white-space:nowrap;left:961.53px;top:456px;font:400 14.98px/1 'Liberation Sans', sans-serif;color:#555;transform:scaleX(0.9703);transform-origin:0 50%;text-decoration:underline;text-decoration-thickness:1px;text-underline-offset:2px;"><b>16</b> h ( <b>3.3%</b> )</span>
<span style="position:absolute;white-space:nowrap;left:882.20px;top:494px;font:700 14.98px/1 'Liberation Sans', sans-serif;color:#306d92;transform:scaleX(0.9223);transform-origin:0 50%;">Others</span>
<span style="position:absolute;white-space:nowrap;left:929.60px;top:494px;font:400 14.98px/1 'Liberation Sans', sans-serif;color:#555;">:</span>
<span style="position:absolute;white-space:nowrap;left:938.20px;top:494px;font:400 14.98px/1 'Liberation Sans', sans-serif;color:#555;transform:scaleX(0.9590);transform-origin:0 50%;text-decoration:underline;text-decoration-thickness:1px;text-underline-offset:2px;"><b>33</b> h ( <b>6.8%</b> )</span>
<div class="obtn" style="left:1138.6px;top:590.2px;width:104.0px;height:35.6px;"></div>
<span style="position:absolute;white-space:nowrap;left:1158.40px;top:600px;font:400 15.49px/1 'Liberation Sans', sans-serif;color:#38b582;letter-spacing:0.716px;">Show all</span>
<div class="panel" style="left:1280.4px;top:234.0px;width:600.6px;height:312.2px;"><div class="ph" style="height:37.0px;"></div><div class="pb" style="top:37.0px;"></div></div>
<span style="position:absolute;white-space:nowrap;left:1384.70px;top:243px;font:400 18.59px/1 'Liberation Sans', sans-serif;color:#555;transform:scaleX(0.9743);transform-origin:0 50%;">Generated vs Forecasted income</span>
<div class="sel" style="left:1660.2px;top:242.4px;width:114.4px;height:21.2px;box-shadow:0 0 0 1.4px #fff,inset 3px 0 3px -2px rgba(150,185,168,0.55),inset -3px 0 3px -2px rgba(150,185,168,0.55);"></div>
<span style="position:absolute;white-space:nowrap;left:1668.75px;top:245px;font:700 16.53px/1 'Liberation Sans', sans-serif;color:#555;transform:scaleX(0.9444);transform-origin:0 50%;">3 months</span>
<svg style="left:1760.60px;top:245.25px" width="8" height="16"><path d="M0.15 6.45L3.6 1.0L7.05 6.45Z M0.15 9.6L3.6 15.0L7.05 9.6Z" fill="#484848"/></svg>
<div style="position:absolute;left:1453.00px;top:297.00px;width:48.60px;height:15.40px;background:#fd5b62;"></div>
<span style="position:absolute;white-space:nowrap;left:1507.50px;top:296px;font:400 15.00px/1 'Liberation Sans', sans-serif;color:#5c5c5c;transform:scaleX(0.9044);transform-origin:0 50%;">Generated</span>
<div style="position:absolute;left:1582.80px;top:297.00px;width:48.00px;height:15.40px;background:#5bb05c;"></div>
<span style="position:absolute;white-space:nowrap;left:1636.28px;top:296px;font:400 15.00px/1 'Liberation Sans', sans-serif;color:#5c5c5c;transform:scaleX(0.9241);transform-origin:0 50%;">Forecasted</span>
<svg style="left:0;top:0" width="1920" height="1098" ><rect x="1364.2" y="322.70" width="512.70" height="1.2" fill="rgba(0,10,5,0.105)"/><rect x="1364.2" y="341.47" width="512.70" height="1.2" fill="rgba(0,10,5,0.105)"/><rect x="1364.2" y="360.24" width="512.70" height="1.2" fill="rgba(0,10,5,0.105)"/><rect x="1364.2" y="379.01" width="512.70" height="1.2" fill="rgba(0,10,5,0.105)"/><rect x="1364.2" y="397.78" width="512.70" height="1.2" fill="rgba(0,10,5,0.105)"/><rect x="1364.2" y="416.55" width="512.70" height="1.2" fill="rgba(0,10,5,0.105)"/><rect x="1364.2" y="435.32" width="512.70" height="1.2" fill="rgba(0,10,5,0.105)"/><rect x="1364.2" y="454.09" width="512.70" height="1.2" fill="rgba(0,10,5,0.105)"/><rect x="1364.2" y="472.86" width="512.70" height="1.2" fill="rgba(0,10,5,0.105)"/><rect x="1364.2" y="491.63" width="512.70" height="1.2" fill="rgba(0,10,5,0.105)"/><rect x="1364.2" y="510.40" width="512.70" height="1.2" fill="rgba(0,10,5,0.105)"/><rect x="1374.10" y="323.30" width="1.2" height="198.40" fill="rgba(0,0,0,0.27)"/><rect x="1541.30" y="323.30" width="1.2" height="198.40" fill="rgba(0,10,5,0.105)"/><rect x="1708.50" y="323.30" width="1.2" height="198.40" fill="rgba(0,10,5,0.105)"/><rect x="1875.70" y="323.30" width="1.2" height="198.40" fill="rgba(0,10,5,0.105)"/><rect x="1364.2" y="510.40" width="512.70" height="1.2" fill="rgba(0,0,0,0.22)"/><rect x="1394.70" y="505.80" width="60.20" height="5.20" fill="#fd5b62"/><rect x="1461.60" y="497.50" width="60.20" height="13.50" fill="#5bb05c"/><rect x="1561.90" y="506.70" width="60.20" height="4.30" fill="#fd5b62"/><rect x="1628.80" y="330.30" width="60.20" height="180.70" fill="#5bb05c"/></svg>
<span style="position:absolute;white-space:nowrap;left:1312.78px;top:315px;font:400 15.00px/1 'Liberation Sans', sans-serif;color:#5c5c5c;transform:scaleX(0.9172);transform-origin:0 50%;">100,000</span>
<span style="position:absolute;white-space:nowrap;left:1320.80px;top:334px;font:400 15.00px/1 'Liberation Sans', sans-serif;color:#5c5c5c;transform:scaleX(0.9092);transform-origin:0 50%;">90,000</span>
<span style="position:absolute;white-space:nowrap;left:1320.80px;top:352px;font:400 15.00px/1 'Liberation Sans', sans-serif;color:#5c5c5c;transform:scaleX(0.9092);transform-origin:0 50%;">80,000</span>
<span style="position:absolute;white-space:nowrap;left:1320.80px;top:371px;font:400 15.00px/1 'Liberation Sans', sans-serif;color:#5c5c5c;transform:scaleX(0.9092);transform-origin:0 50%;">70,000</span>
<span style="position:absolute;white-space:nowrap;left:1320.80px;top:390px;font:400 15.00px/1 'Liberation Sans', sans-serif;color:#5c5c5c;transform:scaleX(0.9092);transform-origin:0 50%;">60,000</span>
<span style="position:absolute;white-space:nowrap;left:1320.80px;top:409px;font:400 15.00px/1 'Liberation Sans', sans-serif;color:#5c5c5c;transform:scaleX(0.9092);transform-origin:0 50%;">50,000</span>
<span style="position:absolute;white-space:nowrap;left:1320.80px;top:428px;font:400 15.00px/1 'Liberation Sans', sans-serif;color:#5c5c5c;transform:scaleX(0.9092);transform-origin:0 50%;">40,000</span>
<span style="position:absolute;white-space:nowrap;left:1320.80px;top:446px;font:400 15.00px/1 'Liberation Sans', sans-serif;color:#5c5c5c;transform:scaleX(0.9092);transform-origin:0 50%;">30,000</span>
<span style="position:absolute;white-space:nowrap;left:1320.80px;top:465px;font:400 15.00px/1 'Liberation Sans', sans-serif;color:#5c5c5c;transform:scaleX(0.9092);transform-origin:0 50%;">20,000</span>
<span style="position:absolute;white-space:nowrap;left:1319.87px;top:484px;font:400 15.00px/1 'Liberation Sans', sans-serif;color:#5c5c5c;transform:scaleX(0.9296);transform-origin:0 50%;">10,000</span>
<span style="position:absolute;white-space:nowrap;left:1354.20px;top:503px;font:400 15.00px/1 'Liberation Sans', sans-serif;color:#5c5c5c;">0</span>
<span style="position:absolute;white-space:nowrap;left:1445.13px;top:523px;font:400 15.00px/1 'Liberation Sans', sans-serif;color:#5c5c5c;">Aug</span>
<span style="position:absolute;white-space:nowrap;left:1612.33px;top:523px;font:400 15.00px/1 'Liberation Sans', sans-serif;color:#5c5c5c;">Sep</span>
<span style="position:absolute;white-space:nowrap;left:1780.62px;top:523px;font:400 15.00px/1 'Liberation Sans', sans-serif;color:#5c5c5c;">Oct</span>
<span style="position:absolute;white-space:nowrap;left:1277.66px;top:410px;font:400 15.00px/1 'Liberation Sans', sans-serif;color:#5c5c5c;transform:rotate(-90deg) scaleX(0.8885);transform-origin:50% 50%;">USD</span>
<div class="panel" style="left:41.0px;top:679.0px;width:910.0px;height:441.0px;"><div class="ph" style="height:31.0px;"></div><div class="pb" style="top:31.0px;"></div></div>
<span style="position:absolute;white-space:nowrap;left:406.82px;top:686px;font:400 18.59px/1 'Liberation Sans', sans-serif;color:#555;transform:scaleX(0.9800);transform-origin:0 50%;">Resourcing by person</span>
<svg style="left:0;top:0" width="1920" height="1098" stroke="#fff" stroke-width="2.2" stroke-linejoin="round"><path d="M217.70 843.00 L217.70 749.00 A94.00 94.00 0 1 1 128.30 813.95 Z" fill="#fd5b62"/><path d="M217.70 843.00 L128.30 813.95 A94.00 94.00 0 0 1 217.70 749.00 Z" fill="#feb45c"/></svg>
<span style="position:absolute;white-space:nowrap;left:177.11px;top:802px;font:400 12.40px/1 'Liberation Sans', sans-serif;color:#fff;">20%</span>
<span style="position:absolute;white-space:nowrap;left:232.51px;top:877px;font:400 12.40px/1 'Liberation Sans', sans-serif;color:#fff;">80%</span>
<svg style="left:0;top:0" width="1920" height="1098" stroke="#fff" stroke-width="2.2" stroke-linejoin="round"><circle cx="217.50" cy="1090.60" r="93.00" fill="#fd5b62" stroke="none"/><path d="M217.50 1090.60 V996.50" /></svg>
<span style="position:absolute;white-space:nowrap;left:87.36px;top:951px;font:700 20.66px/1 'Liberation Sans', sans-serif;color:#555;transform:scaleX(0.9444);transform-origin:0 50%;">Projects allocations</span>
<div style="position:absolute;left:366.20px;top:725.30px;width:555.00px;height:38.40px;border:1px solid #e9e9e9;border-radius:4px;box-sizing:border-box;"></div>
<span style="position:absolute;white-space:nowrap;left:379.60px;top:736px;font:400 16.53px/1 'Liberation Sans', sans-serif;color:#222;transform:scaleX(0.9586);transform-origin:0 50%;">Adam Feeder</span>
<svg style="left:900.8px;top:742.6px" width="10" height="6"><path d="M0 0H9L4.5 4.6Z" fill="#222"/></svg>
<div class="gbtn" style="left:366.2px;top:782.0px;width:61.6px;height:38.4px;"></div>
<span style="position:absolute;white-space:nowrap;left:380.29px;top:794px;font:400 16.53px/1 'Liberation Sans', sans-serif;color:#555;transform:scaleX(0.9139);transform-origin:0 50%;">Prev</span>
<div class="sel" style="left:438.3px;top:790.8px;width:92.2px;height:20.6px;"></div>
<span style="position:absolute;white-space:nowrap;left:447.30px;top:793px;font:400 16.53px/1 'Liberation Sans', sans-serif;color:#555;letter-spacing:0.071px;">Month</span>
<svg style="left:516.70px;top:793.35px" width="8" height="16"><path d="M0.15 6.45L3.6 1.0L7.05 6.45Z M0.15 9.6L3.6 15.0L7.05 9.6Z" fill="#484848"/></svg>
<span style="position:absolute;white-space:nowrap;left:538.80px;top:794px;font:400 16.53px/1 'Liberation Sans', sans-serif;color:#555;transform:scaleX(0.9756);transform-origin:0 50%;">01 Jul-31 Jul 2022</span>
<div class="gbtn" style="left:682.8px;top:782.0px;width:63.4px;height:38.4px;"></div>
<span style="position:absolute;white-space:nowrap;left:696.50px;top:794px;font:400 16.53px/1 'Liberation Sans', sans-serif;color:#555;transform:scaleX(0.9979);transform-origin:0 50%;">Next</span>
<div class="pbar" style="left:365.8px;top:839.2px;width:555.4px;height:22.8px;"></div>
<span style="position:absolute;white-space:nowrap;left:498.85px;top:843px;font:700 14.05px/1 'Liberation Sans', sans-serif;color:#10131f;transform:scaleX(0.9446);transform-origin:0 50%;">120 allocated hours: 120 billable / 0 non-billable</span>
<div class="pbar" style="left:365.8px;top:885.2px;width:555.4px;height:22.8px;"></div>
<span style="position:absolute;white-space:nowrap;left:514.10px;top:889px;font:700 14.05px/1 'Liberation Sans', sans-serif;color:#10131f;transform:scaleX(0.9387);transform-origin:0 50%;">96 logged hours: 96 billable / 0 non-billable</span>
<div class="pbar" style="left:365.8px;top:931.3px;width:555.4px;height:22.8px;"></div>
<span style="position:absolute;white-space:nowrap;left:535.65px;top:936px;font:700 14.05px/1 'Liberation Sans', sans-serif;color:#10131f;transform:scaleX(0.9331);transform-origin:0 50%;">168 available hours, 0 time off hours</span>
<span style="position:absolute;white-space:nowrap;left:383.30px;top:978px;font:700 18.59px/1 'Liberation Sans', sans-serif;color:#555;transform:scaleX(0.9307);transform-origin:0 50%;">Allocated</span>
<span style="position:absolute;white-space:nowrap;left:659.87px;top:978px;font:700 18.59px/1 'Liberation Sans', sans-serif;color:#555;transform:scaleX(0.9266);transform-origin:0 50%;">Logged</span>
<span style="position:absolute;white-space:nowrap;left:383.30px;top:1007px;font:700 14.98px/1 'Liberation Sans', sans-serif;color:#fd5b62;transform:scaleX(0.9116);transform-origin:0 50%;">ActivFix</span>
<span style="position:absolute;white-space:nowrap;left:565.80px;top:1007px;font:400 15.49px/1 'Liberation Sans', sans-serif;color:#fd5b62;transform:scaleX(0.9314);transform-origin:0 50%;">96 h</span>
<span style="position:absolute;white-space:nowrap;left:383.30px;top:1033px;font:700 14.98px/1 'Liberation Sans', sans-serif;color:#feb45c;transform:scaleX(0.9197);transform-origin:0 50%;">AFuzzDev</span>
<span style="position:absolute;white-space:nowrap;left:565.80px;top:1033px;font:400 15.49px/1 'Liberation Sans', sans-serif;color:#feb45c;transform:scaleX(0.9314);transform-origin:0 50%;">24 h</span>
<span style="position:absolute;white-space:nowrap;left:660.80px;top:1007px;font:700 14.98px/1 'Liberation Sans', sans-serif;color:#fd5b62;transform:scaleX(0.9099);transform-origin:0 50%;">ActivFix</span>
<span style="position:absolute;white-space:nowrap;left:843.30px;top:1007px;font:400 15.49px/1 'Liberation Sans', sans-serif;color:#fd5b62;transform:scaleX(0.9517);transform-origin:0 50%;">96 h</span>
<div class="panel" style="left:969.8px;top:679.0px;width:911.2px;height:441.0px;"><div class="ph" style="height:31.0px;"></div><div class="pb" style="top:31.0px;"></div></div>
<span style="position:absolute;white-space:nowrap;left:1335.51px;top:686px;font:400 18.59px/1 'Liberation Sans', sans-serif;color:#555;transform:scaleX(0.9860);transform-origin:0 50%;">Resourcing by project</span>
<svg style="left:0;top:0" width="1920" height="1098" stroke="#fff" stroke-width="2.2" stroke-linejoin="round"><path d="M1147.10 843.00 L1147.10 749.00 A94.00 94.00 0 0 1 1218.14 904.56 Z" fill="#fd5b62"/><path d="M1147.10 843.00 L1218.14 904.56 A94.00 94.00 0 0 1 1054.06 856.38 Z" fill="#feb45c"/><path d="M1147.10 843.00 L1054.06 856.38 A94.00 94.00 0 0 1 1147.10 749.00 Z" fill="#45bdb9"/></svg>
<span style="position:absolute;white-space:nowrap;left:1176.61px;top:820px;font:400 12.40px/1 'Liberation Sans', sans-serif;color:#fff;">36%</span>
<span style="position:absolute;white-space:nowrap;left:1121.01px;top:885px;font:400 12.40px/1 'Liberation Sans', sans-serif;color:#fff;">36%</span>
<span style="position:absolute;white-space:nowrap;left:1098.81px;top:809px;font:400 12.40px/1 'Liberation Sans', sans-serif;color:#fff;">27%</span>
<svg style="left:0;top:0" width="1920" height="1098" stroke="#fff" stroke-width="2.2" stroke-linejoin="round"><path d="M1146.90 1090.60 L1146.90 996.50 A94.10 94.10 0 1 1 1106.83 1175.74 Z" fill="#fd5b62"/><path d="M1146.90 1090.60 L1106.83 1175.74 A94.10 94.10 0 0 1 1146.90 996.50 Z" fill="#45bdb9"/></svg>
<span style="position:absolute;white-space:nowrap;left:1088.41px;top:1076px;font:400 12.40px/1 'Liberation Sans', sans-serif;color:#fff;">43%</span>
<span style="position:absolute;white-space:nowrap;left:1016.56px;top:951px;font:700 20.66px/1 'Liberation Sans', sans-serif;color:#555;transform:scaleX(0.9434);transform-origin:0 50%;">People allocations</span>
<div style="position:absolute;left:1295.60px;top:725.30px;width:555.00px;height:38.40px;border:1px solid #e9e9e9;border-radius:4px;box-sizing:border-box;"></div>
<span style="position:absolute;white-space:nowrap;left:1309.00px;top:736px;font:400 16.53px/1 'Liberation Sans', sans-serif;color:#222;transform:scaleX(0.9667);transform-origin:0 50%;">ActivFix</span>
<svg style="left:1830.2px;top:742.6px" width="10" height="6"><path d="M0 0H9L4.5 4.6Z" fill="#222"/></svg>
<div class="gbtn" style="left:1295.6px;top:782.0px;width:61.6px;height:38.4px;"></div>
<span style="position:absolute;white-space:nowrap;left:1309.69px;top:794px;font:400 16.53px/1 'Liberation Sans', sans-serif;color:#555;transform:scaleX(0.9139);transform-origin:0 50%;">Prev</span>
<div class="sel" style="left:1367.7px;top:790.8px;width:92.2px;height:20.6px;"></div>
<span style="position:absolute;white-space:nowrap;left:1376.70px;top:793px;font:400 16.53px/1 'Liberation Sans', sans-serif;color:#555;letter-spacing:0.071px;">Month</span>
<svg style="left:1446.10px;top:793.35px" width="8" height="16"><path d="M0.15 6.45L3.6 1.0L7.05 6.45Z M0.15 9.6L3.6 15.0L7.05 9.6Z" fill="#484848"/></svg>
<span style="position:absolute;white-space:nowrap;left:1468.20px;top:794px;font:400 16.53px/1 'Liberation Sans', sans-serif;color:#555;transform:scaleX(0.9756);transform-origin:0 50%;">01 Jul-31 Jul 2022</span>
<div class="gbtn" style="left:1612.2px;top:782.0px;width:63.4px;height:38.4px;"></div>
<span style="position:absolute;white-space:nowrap;left:1625.90px;top:794px;font:400 16.53px/1 'Liberation Sans', sans-serif;color:#555;transform:scaleX(0.9979);transform-origin:0 50%;">Next</span>
<div class="pbar" style="left:1295.2px;top:839.2px;width:555.4px;height:22.8px;"></div>
<span style="position:absolute;white-space:nowrap;left:1428.40px;top:843px;font:700 14.05px/1 'Liberation Sans', sans-serif;color:#10131f;transform:scaleX(0.9437);transform-origin:0 50%;">264 allocated hours: 264 billable / 0 non-billable</span>
<div class="pbar" style="left:1295.2px;top:885.2px;width:555.4px;height:22.8px;"></div>
<span style="position:absolute;white-space:nowrap;left:1435.90px;top:889px;font:700 14.05px/1 'Liberation Sans', sans-serif;color:#10131f;transform:scaleX(0.9405);transform-origin:0 50%;">168 logged hours: 168 billable / 0 non-billable</span>
<span style="position:absolute;white-space:nowrap;left:1312.50px;top:931px;font:700 18.59px/1 'Liberation Sans', sans-serif;color:#555;transform:scaleX(0.9299);transform-origin:0 50%;">Allocatedadsasddsaasd</span>
<span style="position:absolute;white-space:nowrap;left:1589.37px;top:931px;font:700 18.59px/1 'Liberation Sans', sans-serif;color:#555;transform:scaleX(0.9311);transform-origin:0 50%;">Logged</span>
<span style="position:absolute;white-space:nowrap;left:1312.50px;top:961px;font:700 14.98px/1 'Liberation Sans', sans-serif;color:#fd5b62;transform:scaleX(0.9368);transform-origin:0 50%;">Adam Feeder</span>
<span style="position:absolute;white-space:nowrap;left:1495.20px;top:961px;font:400 15.49px/1 'Liberation Sans', sans-serif;color:#fd5b62;transform:scaleX(0.9416);transform-origin:0 50%;">96 h</span>
<span style="position:absolute;white-space:nowrap;left:1312.50px;top:987px;font:700 14.98px/1 'Liberation Sans', sans-serif;color:#45bdb9;transform:scaleX(0.9399);transform-origin:0 50%;">Alexis Macintosh</span>
<span style="position:absolute;white-space:nowrap;left:1495.20px;top:987px;font:400 15.49px/1 'Liberation Sans', sans-serif;color:#45bdb9;transform:scaleX(0.9416);transform-origin:0 50%;">72 h</span>
<span style="position:absolute;white-space:nowrap;left:1311.59px;top:1013px;font:700 14.98px/1 'Liberation Sans', sans-serif;color:#feb45c;transform:scaleX(0.9078);transform-origin:0 50%;">BACKLOG ALLOCATIONS</span>
<span style="position:absolute;white-space:nowrap;left:1495.20px;top:1013px;font:400 15.49px/1 'Liberation Sans', sans-serif;color:#feb45c;transform:scaleX(0.9416);transform-origin:0 50%;">96 h</span>
<span style="position:absolute;white-space:nowrap;left:1590.30px;top:961px;font:700 14.98px/1 'Liberation Sans', sans-serif;color:#fd5b62;transform:scaleX(0.9336);transform-origin:0 50%;">Adam Feeder</span>
<span style="position:absolute;white-space:nowrap;left:1772.50px;top:961px;font:400 15.49px/1 'Liberation Sans', sans-serif;color:#fd5b62;transform:scaleX(0.9653);transform-origin:0 50%;">96 h</span>
<span style="position:absolute;white-space:nowrap;left:1590.30px;top:987px;font:700 14.98px/1 'Liberation Sans', sans-serif;color:#45bdb9;transform:scaleX(0.9432);transform-origin:0 50%;">Alexis Macintosh</span>
<span style="position:absolute;white-space:nowrap;left:1772.50px;top:987px;font:400 15.49px/1 'Liberation Sans', sans-serif;color:#45bdb9;transform:scaleX(0.9653);transform-origin:0 50%;">72 h</span>
</div></body></html>
